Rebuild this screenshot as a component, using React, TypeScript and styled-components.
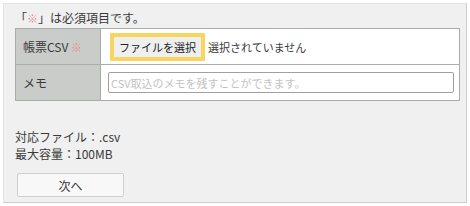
import React from "react";
import styled, { createGlobalStyle } from "styled-components";

const GlobalStyle = createGlobalStyle`
  html, body {
    margin: 0;
    padding: 0;
    background: #ffffff;
  }
  body {
    font-family: "Noto Sans CJK JP", "Noto Sans", sans-serif;
    font-size: 12px;
    color: #3a3a3a;
  }
`;

const Page = styled.div`
  padding: 3px;
  width: 470px;
  height: 206px;
  box-sizing: border-box;
`;

const Panel = styled.div`
  width: 464px;
  height: 200px;
  box-sizing: border-box;
  background: #eff0ef;
  border: 1px solid #e2e3e2;
  border-right-color: #cdcdcd;
  border-bottom-color: #cdcdcd;
  padding: 4px 7px 0 11px;
`;

const Note = styled.p`
  margin: 0;
  height: 20px;
  line-height: 20px;
  font-size: 12px;
`;

const Mark = styled.span`
  color: #f28b8b;
  font-size: 11px;
`;

const FormTable = styled.table`
  width: 445px;
  border-collapse: collapse;
  background: #ffffff;
`;

const Label = styled.th`
  width: 85px;
  height: 35px;
  padding: 0 0 0 7px;
  box-sizing: border-box;
  background: #c9ccc9;
  border: 1px solid #a9aca9;
  text-align: left;
  font-weight: normal;
  font-size: 12px;
  color: #3a3a3a;
`;

const Cell = styled.td`
  height: 35px;
  padding: 0 5px 0 7px;
  border: 1px solid #a9aca9;
  background: #ffffff;
`;

const FileRow = styled.div`
  display: flex;
  align-items: center;
  gap: 3px;
  padding-left: 2px;
`;

const FileButton = styled.button`
  height: 28px;
  padding: 0 5px;
  background: #efefef;
  border: 4px solid #f8d55e;
  border-radius: 1px;
  font-family: inherit;
  font-size: 11px;
  color: #222222;
`;

const FileStatus = styled.span`
  font-size: 11px;
  color: #3a3a3a;
`;

const MemoInput = styled.input`
  width: 100%;
  height: 21px;
  box-sizing: border-box;
  border: 1px solid #a0a0a0;
  border-radius: 2px;
  padding: 0 2px;
  font-family: inherit;
  font-size: 11px;
  &::placeholder {
    color: #c3c3c3;
  }
`;

const Info = styled.div`
  margin-top: 27px;
  line-height: 17px;
  font-size: 12px;
`;

const NextButton = styled.button`
  display: block;
  margin: 11px 0 0 2px;
  width: 107px;
  height: 24px;
  background: #f8f8f8;
  border: 1px solid #cfcfcf;
  border-radius: 2px;
  font-family: inherit;
  font-size: 12px;
  color: #3a3a3a;
`;

export default function App() {
  return (
    <>
      <GlobalStyle />
      <Page>
        <Panel>
          <Note>
            「<Mark>※</Mark>」は必須項目です。
          </Note>
          <FormTable>
            <tbody>
              <tr>
                <Label>
                  帳票CSV <Mark>※</Mark>
                </Label>
                <Cell>
                  <FileRow>
                    <FileButton type="button">ファイルを選択</FileButton>
                    <FileStatus>選択されていません</FileStatus>
                  </FileRow>
                </Cell>
              </tr>
              <tr>
                <Label>メモ</Label>
                <Cell>
                  <MemoInput placeholder="CSV取込のメモを残すことができます。" />
                </Cell>
              </tr>
            </tbody>
          </FormTable>
          <Info>
            対応ファイル：.csv
            <br />
            最大容量：100MB
          </Info>
          <NextButton type="button">次へ</NextButton>
        </Panel>
      </Page>
    </>
  );
}
